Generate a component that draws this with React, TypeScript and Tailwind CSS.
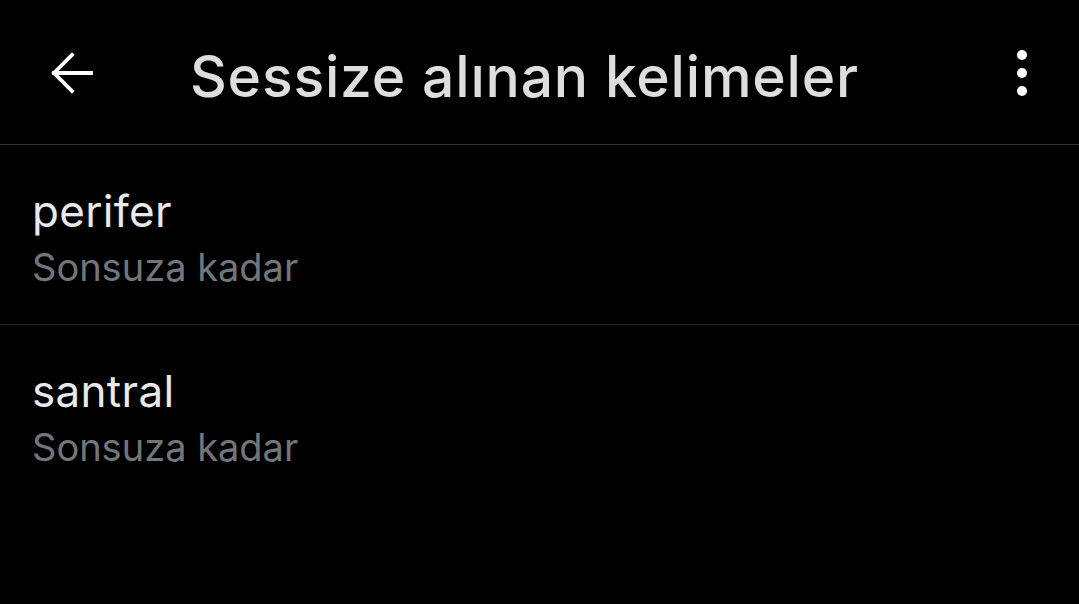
import React from 'react';

interface MutedWord {
    word: string;
    duration: string;
}

const mutedWords: MutedWord[] = [
    { word: 'perifer', duration: 'Sonsuza kadar' },
    { word: 'santral', duration: 'Sonsuza kadar' },
];

const BackArrow: React.FC = () => (
    <svg width="42" height="42" viewBox="0 0 42 42" fill="none" stroke="#ffffff" strokeWidth="3.8" strokeLinecap="square">
        <path d="M3 21h37" />
        <path d="M21 3L3 21l18 18" />
    </svg>
);

const MoreDots: React.FC = () => (
    <div className="flex flex-col items-center gap-[8px]">
        <span className="block w-[10px] h-[10px] rounded-full bg-white" />
        <span className="block w-[10px] h-[10px] rounded-full bg-white" />
        <span className="block w-[10px] h-[10px] rounded-full bg-white" />
    </div>
);

const App: React.FC = () => {
    return (
        <div className="w-full min-h-screen bg-black text-[#e7e9ea]" style={{ fontFamily: 'Inter, "Noto Sans", sans-serif' }}>
            {/* Header */}
            <div className="h-[145px] flex items-center border-b border-[#2f3336]">
                <div className="w-[190px] pl-[51px] pt-[2px] flex items-center">
                    <BackArrow />
                </div>
                <h1 className="flex-1 text-[57px] font-medium text-[#dedede] leading-none pt-[8px] tracking-[0.8px]">
                    Sessize alınan kelimeler
                </h1>
                <div className="pr-[52px] pt-[2px]">
                    <MoreDots />
                </div>
            </div>

            {/* List */}
            {mutedWords.map((item, i) => (
                <div
                    key={item.word}
                    className={`h-[180px] px-[32px] pt-[40px] ${i < mutedWords.length - 1 ? 'border-b border-[#202327]' : ''}`}
                >
                    <p className="text-[44px] leading-[52px] text-[#e7e9ea] tracking-[0.3px]">{item.word}</p>
                    <p className="text-[38px] leading-[60px] text-[#71767b]">{item.duration}</p>
                </div>
            ))}
        </div>
    );
};

export default App;
